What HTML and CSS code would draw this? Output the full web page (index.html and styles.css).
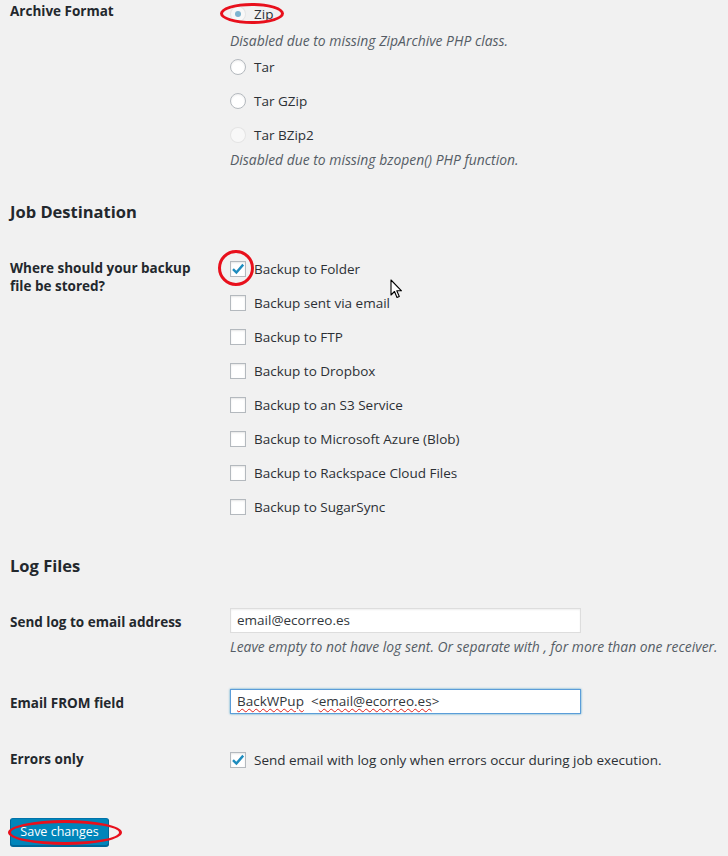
FILE: index.html
```html
<!DOCTYPE html>
<html>
<head>
<meta charset="utf-8">
<link rel="stylesheet" href="styles.css">
</head>
<body>
<div class="page">
  <div class="row row-archive">
    <div class="label">Archive Format</div>
    <div class="field">
      <div class="opt opt-zip"><span class="radio radio-disabled-checked"></span><span>Zip</span><span class="mark mark-zip"></span></div>
      <p class="desc desc-zip">Disabled due to missing ZipArchive PHP class.</p>
      <div class="opt"><span class="radio"></span><span>Tar</span></div>
      <div class="opt"><span class="radio"></span><span>Tar GZip</span></div>
      <div class="opt opt-last"><span class="radio radio-disabled"></span><span>Tar BZip2</span></div>
      <p class="desc desc-bzip">Disabled due to missing bzopen() PHP function.</p>
    </div>
  </div>

  <h3 class="section h-dest">Job Destination</h3>

  <div class="row row-dest">
    <div class="label label-wrap">Where should your backup file be stored?</div>
    <div class="field">
      <div class="opt"><span class="check"><svg class="tick" width="16" height="16" viewBox="0 0 16 16"><path d="M3 8.2 L6.4 11.6 L13.2 3.6" fill="none" stroke="#1e8cbe" stroke-width="2.4" stroke-linecap="butt" stroke-linejoin="miter"/></svg></span><span>Backup to Folder</span><span class="mark mark-check"></span>
        <svg class="cursor" width="13" height="21" viewBox="0 0 13 21"><path d="M1 1 L1 16 L4.5 12.5 L7 18.5 L9.3 17.5 L6.8 11.8 L11.5 11.8 Z" fill="#fff" stroke="#000" stroke-width="1.1" stroke-linejoin="round"/></svg>
      </div>
      <div class="opt"><span class="check"></span><span>Backup sent via email</span></div>
      <div class="opt"><span class="check"></span><span>Backup to FTP</span></div>
      <div class="opt"><span class="check"></span><span>Backup to Dropbox</span></div>
      <div class="opt"><span class="check"></span><span>Backup to an S3 Service</span></div>
      <div class="opt"><span class="check"></span><span>Backup to Microsoft Azure (Blob)</span></div>
      <div class="opt"><span class="check"></span><span>Backup to Rackspace Cloud Files</span></div>
      <div class="opt opt-last"><span class="check"></span><span>Backup to SugarSync</span></div>
    </div>
  </div>

  <h3 class="section h-log">Log Files</h3>

  <div class="row row-sendlog">
    <div class="label label-input">Send log to email address</div>
    <div class="field">
      <div class="input">email@ecorreo.es</div>
      <p class="desc desc-log">Leave empty to not have log sent. Or separate with , for more than one receiver.</p>
    </div>
  </div>

  <div class="row row-from">
    <div class="label label-input">Email FROM field</div>
    <div class="field">
      <div class="input input-focus"><span class="spell">BackWPup</span>&nbsp; &lt;<span class="spell">email@ecorreo.es</span>&gt;</div>
    </div>
  </div>

  <div class="row row-errors">
    <div class="label">Errors only</div>
    <div class="field">
      <div class="opt opt-last"><span class="check"><svg class="tick" width="16" height="16" viewBox="0 0 16 16"><path d="M3 8.2 L6.4 11.6 L13.2 3.6" fill="none" stroke="#1e8cbe" stroke-width="2.4" stroke-linecap="butt" stroke-linejoin="miter"/></svg></span><span>Send email with log only when errors occur during job execution.</span></div>
    </div>
  </div>

  <div class="submit">
    <button class="button-primary">Save changes</button>
    <span class="mark mark-btn"></span>
  </div>
</div>
</body>
</html>
```

FILE: styles.css
```css
html, body {
  margin: 0;
  padding: 0;
  background: #f1f1f1;
}
body {
  font-family: "Open Sans", "Noto Sans", sans-serif;
  font-size: 13.5px;
  color: #2c3035;
  width: 728px;
  height: 856px;
  overflow: hidden;
}
.page {
  position: relative;
  padding: 0 0 0 10px;
}
.row {
  display: flex;
}
.label {
  width: 220px;
  flex: none;
  font-weight: 700;
  color: #23282d;
  font-size: 13.5px;
  line-height: 18px;
}
.label-wrap {
  width: 190px;
  margin-right: 30px;
}
.field {
  flex: 1;
  position: relative;
}
.opt {
  position: relative;
  display: flex;
  align-items: center;
  height: 20px;
  margin-bottom: 14px;
  gap: 8px;
  white-space: nowrap;
}
.opt-last { margin-bottom: 0; }
.desc {
  margin: 0;
  font-style: italic;
  color: #555d66;
  font-size: 13.9px;
  line-height: 20px;
  white-space: nowrap;
}

/* archive row */
.row-archive .label { padding-top: 2px; }
.row-archive .field { padding-top: 4px; }
.opt-zip { margin-bottom: 0; }
.desc-zip { margin: 7px 0 6px; }
.desc-bzip { margin-top: 5px; }

.radio {
  width: 14px;
  height: 14px;
  border: 1px solid #b4b9be;
  border-radius: 50%;
  background: #fff;
  box-shadow: inset 0 1px 2px rgba(0,0,0,.07);
  flex: none;
  position: relative;
}
.radio-disabled,
.radio-disabled-checked {
  border-color: rgba(222,222,222,.75);
  background: rgba(255,255,255,.5);
  box-shadow: none;
}
.radio-disabled-checked::after {
  content: "";
  position: absolute;
  left: 4px;
  top: 4px;
  width: 6px;
  height: 6px;
  border-radius: 50%;
  background: #7eb4d0;
}

.check {
  width: 14px;
  height: 14px;
  border: 1px solid #b4b9be;
  background: #fff;
  box-shadow: inset 0 1px 2px rgba(0,0,0,.1);
  flex: none;
  position: relative;
}
.tick {
  position: absolute;
  left: -1px;
  top: -1px;
}

/* headings */
.section {
  margin: 0;
  font-size: 16.5px;
  font-weight: 700;
  color: #23282d;
  line-height: 22px;
}
.h-dest { margin-top: 31px; }
.row-dest { margin-top: 35px; }
.row-dest .label { padding-top: 1px; }
.row-dest .field { padding-top: 1px; }
.h-log { margin-top: 38px; }

.row-sendlog { margin-top: 31px; }
.label-input { padding-top: 5px; }
.input {
  box-sizing: border-box;
  width: 351px;
  height: 25px;
  border: 1px solid #ddd;
  background: #fff;
  box-shadow: inset 0 1px 2px rgba(0,0,0,.07);
  font-size: 13.5px;
  line-height: 23px;
  padding: 0 6px;
  color: #32373c;
  white-space: nowrap;
}
.input-focus {
  border-color: #5b9dd9;
  box-shadow: 0 0 2px rgba(30,140,190,.8);
}
.spell {
  text-decoration: underline wavy #e0201a;
  text-decoration-thickness: 1px;
  text-underline-offset: 2px;
}
.desc-log { margin-top: 4px; }

.row-from { margin-top: 32px; }
.row-errors { margin-top: 35px; }
.row-errors .label { padding-top: 1px; }
.row-errors .field { padding-top: 1px; }

.submit {
  position: relative;
  margin-top: 48px;
}
.button-primary {
  font-family: "Open Sans", "Noto Sans", sans-serif;
  background: #0085ba;
  border: 1px solid;
  border-color: #0073aa #006799 #006799;
  box-shadow: 0 1px 0 #006799;
  color: #fff;
  font-size: 12.5px;
  height: 28px;
  width: 99px;
  padding: 0;
  border-radius: 3px;
  line-height: 26px;
}

/* annotation marks */
.mark {
  position: absolute;
  border: 3px solid #e8101c;
  border-radius: 50%;
  box-sizing: border-box;
  pointer-events: none;
}
.mark-zip {
  left: -10px;
  top: -1px;
  width: 64px;
  height: 21px;
}
.mark-check {
  left: -12px;
  top: -9px;
  width: 36px;
  height: 36px;
}
.mark-btn {
  left: -2px;
  top: 2px;
  width: 114px;
  height: 25px;
}
.cursor {
  position: absolute;
  left: 160px;
  top: 20px;
}
```
